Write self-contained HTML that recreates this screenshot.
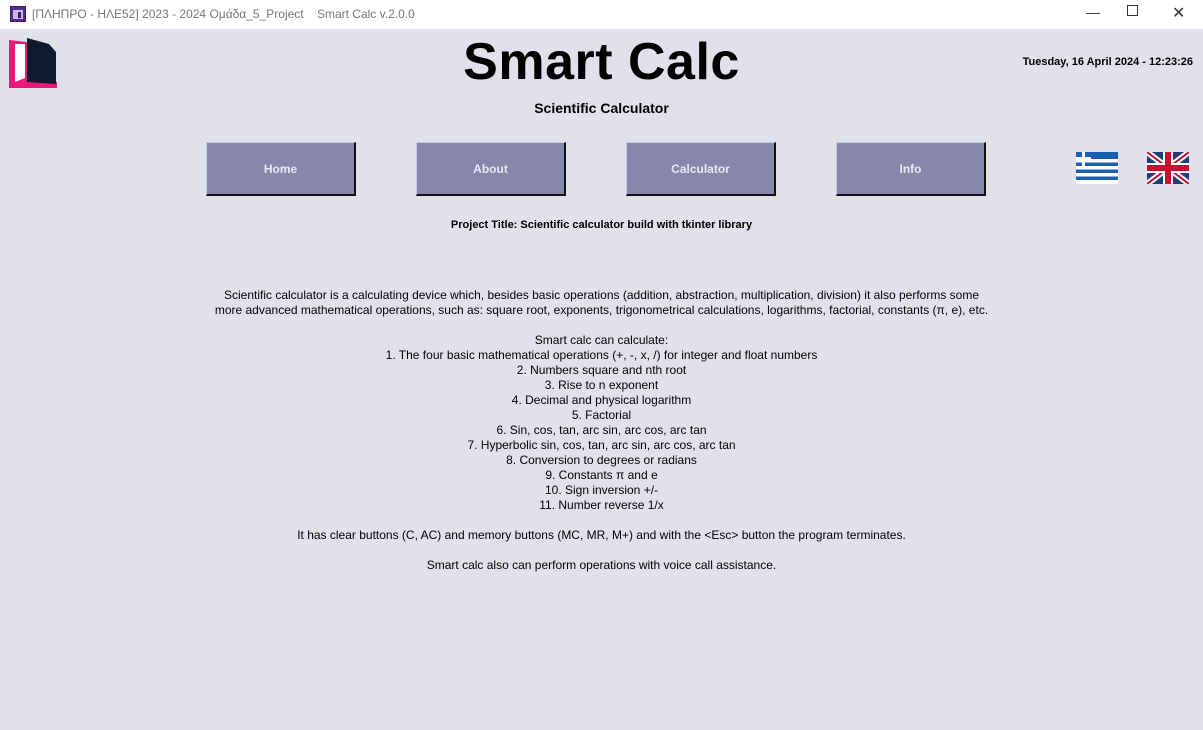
<!DOCTYPE html>
<html><head><meta charset="utf-8"><style>
*{margin:0;padding:0;box-sizing:border-box}
body{width:1203px;height:730px;background:#e1e1eb;font-family:"Liberation Sans","DejaVu Sans",sans-serif;position:relative;overflow:hidden}
.tb{position:absolute;left:0;top:0;width:1203px;height:29px;background:#fff;font-size:12px;color:#777}
.tb span{position:absolute;top:7px}
.t{position:absolute;left:0;width:1203px;text-align:center;color:#000}
.btn{position:absolute;top:142px;width:150px;height:54px;background:#8787ab;color:#e8e8f4;font-weight:bold;font-size:12px;text-align:center;line-height:52px;border-top:1px solid #c8c8e8;border-left:1px solid #c8c8e8;border-right:2px solid #111;border-bottom:2px solid #111}
.body{position:absolute;left:0;top:288px;width:1203px;text-align:center;font-size:12px;line-height:15px;color:#000}
</style></head><body>
<div class="tb">
<svg style="position:absolute;left:10px;top:6px" width="16" height="16"><rect x="0.5" y="0.5" width="15" height="15" fill="#5a2a8a" stroke="#3a1a6a"/><rect x="3" y="4" width="10" height="9" fill="#c8b8e8"/><rect x="8" y="6" width="3" height="6" fill="#3a1a6a"/></svg>
<span style="left:32px">[ΠΛΗΠΡΟ - ΗΛΕ52] 2023 - 2024 Ομάδα_5_Project &nbsp;&nbsp; Smart Calc v.2.0.0</span>
<span style="left:1086px;top:4px;font-size:14px;color:#333">—</span>
<span style="left:1127px;top:5px;width:11px;height:11px;border:1px solid #333"></span>
<span style="left:1172px;top:3px;font-size:16px;color:#333">✕</span>
</div>
<svg style="position:absolute;left:9px;top:38px" width="48" height="50"><polygon points="0,2 18,4 20,50 0,50" fill="#e8197a"/><polygon points="0,44 48,44 48,50 0,50" fill="#e8197a"/><polygon points="18,0 40,6 47,14 47,46 18,44" fill="#0d1a30"/><polygon points="6,6 16,6 16,40 6,44" fill="#fff"/></svg>
<div class="t" style="top:32px;font-size:52px;font-weight:bold;letter-spacing:0.5px">Smart Calc</div>
<div class="t" style="top:100px;font-size:14px;font-weight:bold">Scientific Calculator</div>
<div style="position:absolute;right:10px;top:56px;font-size:11px;font-weight:bold">Tuesday, 16 April 2024 - 12:23:26</div>
<div class="btn" style="left:206px">Home</div>
<div class="btn" style="left:416px">About</div>
<div class="btn" style="left:626px">Calculator</div>
<div class="btn" style="left:836px">Info</div>
<svg style="position:absolute;left:1076px;top:152px" width="42" height="32"><g fill="#1a5fb4"><rect x="0" y="0" width="42" height="32"/></g><g fill="#fff"><rect x="0" y="7" width="42" height="3.5"/><rect x="0" y="14" width="42" height="3.5"/><rect x="0" y="21" width="42" height="3.5"/><rect x="0" y="28" width="42" height="4"/><rect x="0" y="5" width="15" height="3"/><rect x="6" y="0" width="3" height="14"/></g></svg>
<svg style="position:absolute;left:1147px;top:152px" width="42" height="32"><rect width="42" height="32" fill="#233a7a"/><path d="M0 0L42 32M42 0L0 32" stroke="#fff" stroke-width="6"/><path d="M0 0L42 32M42 0L0 32" stroke="#c8102e" stroke-width="2"/><rect x="16" y="0" width="10" height="32" fill="#fff"/><rect x="0" y="11" width="42" height="10" fill="#fff"/><rect x="18" y="0" width="6" height="32" fill="#c8102e"/><rect x="0" y="13" width="42" height="6" fill="#c8102e"/></svg>
<div class="t" style="top:219px;font-size:11px;font-weight:bold">Project Title: Scientific calculator build with tkinter library</div>
<div class="body">Scientific calculator is a calculating device which, besides basic operations (addition, abstraction, multiplication, division) it also performs some<br>more advanced mathematical operations, such as: square root, exponents, trigonometrical calculations, logarithms, factorial, constants (π, e), etc.<br><br>Smart calc can calculate:<br>1. The four basic mathematical operations (+, -, x, /) for integer and float numbers<br>2. Numbers square and nth root<br>3. Rise to n exponent<br>4. Decimal and physical logarithm<br>5. Factorial<br>6. Sin, cos, tan, arc sin, arc cos, arc tan<br>7. Hyperbolic sin, cos, tan, arc sin, arc cos, arc tan<br>8. Conversion to degrees or radians<br>9. Constants π and e<br>10. Sign inversion +/-<br>11. Number reverse 1/x<br><br>It has clear buttons (C, AC) and memory buttons (MC, MR, M+) and with the &lt;Esc&gt; button the program terminates.<br><br>Smart calc also can perform operations with voice call assistance.</div>
</body></html>
